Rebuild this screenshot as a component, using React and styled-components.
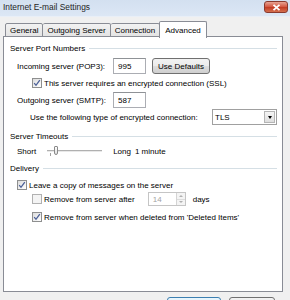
import React from "react";
import { styled, createGlobalStyle } from "styled-components";

const GlobalStyle = createGlobalStyle`
  * { box-sizing: border-box; }
  body {
    margin: 0;
    background: #f0f0f0;
    font-family: "Liberation Sans", Arial, sans-serif;
    font-size: 8px;
    color: #000;
  }
`;

const Window = styled.div`
  width: 290px;
  height: 300px;
  overflow: hidden;
  background: #f0f0f0;
`;

const TitleBar = styled.div`
  height: 17px;
  display: flex;
  align-items: center;
  justify-content: space-between;
  padding: 0 2px 0 3px;
  background: linear-gradient(#d3e0f0, #dce7f5);
  border-bottom: 1px solid #e9eff7;
`;

const Title = styled.span`
  font-size: 8.4px;
  color: #1e1e1e;
  margin-top: -2px;
`;

const CloseButton = styled.div`
  width: 24px;
  height: 12px;
  margin-top: -2px;
  border: 1px solid #8a3a2e;
  border-radius: 3px;
  background: linear-gradient(#e8a493, #d2553f 50%, #c23a22 51%, #d4704f);
  display: flex;
  align-items: center;
  justify-content: center;
`;

const Body = styled.div`
  padding: 4px 7px 0 3px;
`;

const TabRow = styled.div`
  display: flex;
  align-items: flex-end;
  padding-left: 2px;
  height: 16px;
  position: relative;
  z-index: 1;
`;

const Tab = styled.div`
  height: ${(p) => (p.$active ? "17px" : "14px")};
  padding: 0 ${(p) => (p.$active ? "5px" : "4px")};
  margin: 0 ${(p) => (p.$active ? "-1px" : "0")} ${(p) => (p.$active ? "-1px" : "0")};
  display: flex;
  align-items: center;
  border: 1px solid #898c95;
  border-bottom: ${(p) => (p.$active ? "none" : "1px solid #898c95")};
  border-left: ${(p) => (p.$first || p.$active ? "1px solid #898c95" : "none")};
  background: ${(p) => (p.$active ? "#fff" : "linear-gradient(#f2f2f2, #e4e4e4)")};
  border-radius: 2px 2px 0 0;
  white-space: nowrap;
`;

const Panel = styled.div`
  height: 256px;
  margin-top: -1px;
  border: 1px solid #898c95;
  background: #fff;
  padding: 5px 5px 0 6px;
`;

const GroupHeader = styled.div`
  height: 12px;
  margin-top: ${(p) => p.$top || 0}px;
  display: flex;
  align-items: center;
  gap: 4px;
  white-space: nowrap;
  &::after {
    content: "";
    flex: 1;
    height: 1px;
    background: #d5dfe5;
  }
`;

const Row = styled.div`
  display: flex;
  align-items: center;
  height: ${(p) => p.$h || 12}px;
  margin-top: ${(p) => p.$top || 0}px;
  padding-left: ${(p) => 7 + (p.$indent || 0)}px;
  white-space: nowrap;
`;

const FieldLabel = styled.span`
  width: 96px;
  flex: none;
`;

const TextBox = styled.div`
  width: 33px;
  height: 16px;
  flex: none;
  border: 1px solid #abadb3;
  border-top-color: #8f9296;
  background: #fff;
  display: flex;
  align-items: center;
  padding-left: 4px;
`;

const PushButton = styled.div`
  margin-left: 6px;
  width: 58px;
  height: 16px;
  flex: none;
  border: 1px solid #707070;
  border-radius: 3px;
  background: linear-gradient(#f2f2f2, #ebebeb 50%, #dddddd 51%, #cfcfcf);
  display: flex;
  align-items: center;
  justify-content: center;
`;

const Check = styled.span`
  width: 10px;
  height: 10px;
  flex: none;
  margin-right: 2px;
  border: 1px solid ${(p) => (p.$disabled ? "#b1b1b1" : "#8e8f8f")};
  background: ${(p) =>
    p.$disabled ? "#f4f4f4" : "linear-gradient(135deg, #dcdcdc, #ffffff)"};
  display: flex;
  align-items: center;
  justify-content: center;
`;

const CheckMark = () => (
  <svg width="8" height="8" viewBox="0 0 8 8">
    <path d="M1.2 4.2 L3 6.3 L6.8 1.2" fill="none" stroke="#4a5f97" strokeWidth="1.3" />
  </svg>
);

const Select = styled.div`
  margin-left: auto;
  width: 65px;
  height: 16px;
  flex: none;
  border: 1px solid #a0a0a0;
  background: #fff;
  display: flex;
  align-items: center;
  padding-left: 2px;
`;

const SelectValue = styled.span`
  flex: 1;
`;

const DropButton = styled.span`
  width: 11px;
  height: 12px;
  margin-right: 1px;
  border: 1px solid #b5b5b5;
  background: linear-gradient(#f5f5f5, #dedede);
  display: flex;
  align-items: center;
  justify-content: center;
  &::after {
    content: "";
    border-left: 2.5px solid transparent;
    border-right: 2.5px solid transparent;
    border-top: 3px solid #000;
  }
`;

const Slider = styled.div`
  width: 55px;
  height: 12px;
  flex: none;
  margin: 0 11px;
  position: relative;
  display: flex;
  align-items: center;
`;

const Track = styled.div`
  width: 100%;
  height: 2px;
  border-top: 1px solid #b0b0b0;
  border-bottom: 1px solid #e8e8e8;
`;

const Thumb = styled.div`
  position: absolute;
  left: 7px;
  top: 1px;
  width: 4px;
  height: 9px;
  border: 1px solid #8a8a8a;
  border-radius: 1px 1px 2px 2px;
  background: linear-gradient(#fdfdfd, #e2e2e2);
`;

const Tick = styled.div`
  position: absolute;
  left: 3px;
  top: 8px;
  width: 1px;
  height: 3px;
  background: #a0a0a0;
`;

const Spacer = styled.span`
  width: ${(p) => p.$w}px;
  flex: none;
`;

const Spinner = styled.div`
  margin-left: ${(p) => p.$left}px;
  width: 38px;
  height: 14px;
  flex: none;
  border: 1px solid #c5c5c5;
  background: #fff;
  display: flex;
  align-items: stretch;
  padding-left: 4px;
  color: #a3a3a3;
`;

const SpinValue = styled.span`
  flex: 1;
  display: flex;
  align-items: center;
`;

const SpinButtons = styled.span`
  width: 9px;
  display: flex;
  flex-direction: column;
  border-left: 1px solid #d4d4d4;
`;

const SpinArrow = styled.span`
  flex: 1;
  display: flex;
  align-items: center;
  justify-content: center;
  background: #f4f4f4;
  border-bottom: ${(p) => (p.$up ? "1px solid #dcdcdc" : "none")};
  &::after {
    content: "";
    border-left: 2px solid transparent;
    border-right: 2px solid transparent;
    ${(p) => (p.$up ? "border-bottom: 2px solid #b0b0b0;" : "border-top: 2px solid #b0b0b0;")}
  }
`;

const ButtonBar = styled.div`
  display: flex;
  justify-content: flex-end;
  gap: 8px;
  padding: 5px 8px 0 0;
`;

const DialogButton = styled.div`
  width: ${(p) => p.$w}px;
  height: 20px;
  border: 1px solid ${(p) => (p.$default ? "#3c7fb1" : "#707070")};
  border-radius: 3px;
  background: ${(p) =>
    p.$default ? "linear-gradient(#eaf6fd, #bee6fd)" : "linear-gradient(#f2f2f2, #dddddd)"};
`;

export default function App() {
  return (
    <Window>
      <GlobalStyle />
      <TitleBar>
        <Title>Internet E-mail Settings</Title>
        <CloseButton>
          <svg width="9" height="7" viewBox="0 0 9 7">
            <path d="M1.5 0.8 L7.5 6.2 M7.5 0.8 L1.5 6.2" stroke="#fff" strokeWidth="1.8" />
          </svg>
        </CloseButton>
      </TitleBar>
      <Body>
        <TabRow>
          <Tab $first>General</Tab>
          <Tab>Outgoing Server</Tab>
          <Tab>Connection</Tab>
          <Tab $active>Advanced</Tab>
        </TabRow>
        <Panel>
          <GroupHeader>Server Port Numbers</GroupHeader>
          <Row $h={16} $top={4}>
            <FieldLabel>Incoming server (POP3):</FieldLabel>
            <TextBox>995</TextBox>
            <PushButton>Use Defaults</PushButton>
          </Row>
          <Row $top={3} $indent={15}>
            <Check>
              <CheckMark />
            </Check>
            This server requires an encrypted connection (SSL)
          </Row>
          <Row $h={16} $top={3}>
            <FieldLabel>Outgoing server (SMTP):</FieldLabel>
            <TextBox>587</TextBox>
          </Row>
          <Row $h={16} $top={1} $indent={13}>
            Use the following type of encrypted connection:
            <Select>
              <SelectValue>TLS</SelectValue>
              <DropButton />
            </Select>
          </Row>

          <GroupHeader $top={5}>Server Timeouts</GroupHeader>
          <Row $top={3}>
            Short
            <Slider>
              <Track />
              <Tick />
              <Thumb />
            </Slider>
            Long
            <Spacer $w={4} />1 minute
          </Row>

          <GroupHeader $top={5}>Delivery</GroupHeader>
          <Row $top={5}>
            <Check>
              <CheckMark />
            </Check>
            Leave a copy of messages on the server
          </Row>
          <Row $h={14} $top={1} $indent={15}>
            <Check $disabled />
            Remove from server after
            <Spinner $left={13}>
              <SpinValue>14</SpinValue>
              <SpinButtons>
                <SpinArrow $up />
                <SpinArrow />
              </SpinButtons>
            </Spinner>
            <Spacer $w={7} />
            days
          </Row>
          <Row $top={5} $indent={15}>
            <Check>
              <CheckMark />
            </Check>
            Remove from server when deleted from 'Deleted Items'
          </Row>
        </Panel>
        <ButtonBar>
          <DialogButton $default $w={54} />
          <DialogButton $w={46} />
        </ButtonBar>
      </Body>
    </Window>
  );
}
